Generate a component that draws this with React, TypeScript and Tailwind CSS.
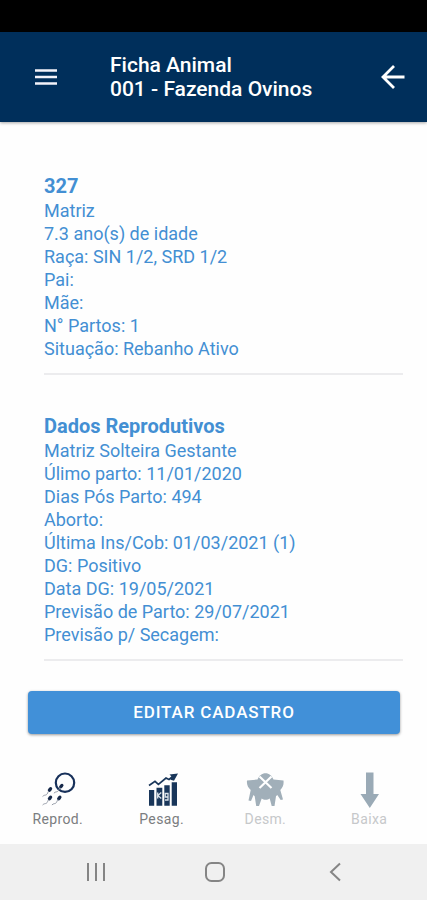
import * as React from "react";

interface SectionProps {
  title: string;
  lines: string[];
}

interface TabProps {
  label: string;
  disabled?: boolean;
  children: React.ReactNode;
}

const animal = {
  id: "327",
  lines: [
    "Matriz",
    "7.3 ano(s) de idade",
    "Raça: SIN 1/2, SRD 1/2",
    "Pai:",
    "Mãe:",
    "N° Partos: 1",
    "Situação: Rebanho Ativo",
  ],
};

const reproducao = [
  "Matriz Solteira Gestante",
  "Úlimo parto: 11/01/2020",
  "Dias Pós Parto: 494",
  "Aborto:",
  "Última Ins/Cob: 01/03/2021 (1)",
  "DG: Positivo",
  "Data DG: 19/05/2021",
  "Previsão de Parto: 29/07/2021",
  "Previsão p/ Secagem:",
];

const MenuIcon = () => (
  <svg viewBox="0 0 24 18" className="h-[18px] w-6" stroke="#f3f3fa" strokeWidth="2.6">
    <path d="M1 2.5h22M1 9h22M1 15.5h22" />
  </svg>
);

const BackIcon = () => (
  <svg
    viewBox="0 0 26 26"
    className="size-[26px]"
    fill="none"
    stroke="#ffffff"
    strokeWidth="2.8"
  >
    <path d="M24.5 13H3M14 2L3 13l11 11" />
  </svg>
);

const Sperm = ({ x, y }: { x: number; y: number }) => (
  <g transform={`translate(${x} ${y})`}>
    <ellipse rx="2.7" ry="1.7" transform="rotate(-48)" fill="#16294a" />
    <path
      d="M-1.3 1.6C-2.6 3-2.2 4.4-3.6 5.2S-5.6 5.2-7.4 7"
      fill="none"
      stroke="#8b929e"
      strokeWidth="0.9"
    />
  </g>
);

const ReprodIcon = () => (
  <svg viewBox="0 0 36 36" className="size-9">
    <circle cx="25" cy="10.7" r="9.2" fill="none" stroke="#17305a" strokeWidth="2.2" />
    <Sperm x={21.3} y={14.2} />
    <Sperm x={10} y={17.5} />
    <Sperm x={10} y={26} />
    <Sperm x={19.3} y={26} />
  </svg>
);

const PesagIcon = () => (
  <svg viewBox="0 0 36 36" className="size-9">
    <g fill="#19365a">
      <path d="M5 18h5.2v15.7H5zM12.5 15.7h5.8v18h-5.800zM20.3 13.3h5.4v20.400h-5.4zM27.7 10.3H33v23.4h-5.3z" />
      <path d="M34 1.500l-8.500 1 2 2-1 3.200 3.500 1z" />
    </g>
    <path
      d="M5 13.5l6-4.2 3.4 3L22 6l3 1.5 5-4"
      fill="none"
      stroke="#19365a"
      strokeWidth="1.7"
    />
    <path
      d="M13.700 20.500v6M17.300 20.500l-3.400 3 3.400 3M24 21.500h-2.800v3.500H24zM24 25v3h-3"
      fill="none"
      stroke="#dbe3ea"
      strokeWidth="1.300"
    />
  </svg>
);

const DesmIcon = () => (
  <svg viewBox="0 0 38 36" className="h-9 w-[38px]">
    <path
      d="M1 8.5l10.500-1C13 3.500 16 1.200 19.500 1.200s6.500 2.300 8 6.300l10 1c.5 4-.7 7-3.200 9.500l2.700 9.500-2.300.5-3.400-5-1.300 1.200-1.500 9.800h-2.800l-2-7.500c-2 1.800-6 1.800-8 0L13 34h-2.800l-1.500-9.800L7.500 23 5 29l-2.500-.5L4.700 18C2 15.500.5 12.500 1 8.500z"
      fill="#a1afb9"
    />
    <path d="M13.500 4.500l12 11.500M25.500 4.500l-12 11.500" stroke="#ffffff" strokeWidth="2.200" />
  </svg>
);

const BaixaIcon = () => (
  <svg viewBox="0 0 36 36" className="size-9" fill="#9aaab6">
    <path d="M15 .5h7.500V22H28l-9.200 14L9.500 22H15z" />
  </svg>
);

const Section = ({ title, lines }: SectionProps) => (
  <section className="ml-11 mr-6 border-b-2 border-[#ececee] pb-[13px] text-[#438fd3]">
    <h2 className="text-xl font-bold leading-[26px]">{title}</h2>
    {lines.map((line) => (
      <p key={line} className="text-lg leading-[23px]">
        {line}
      </p>
    ))}
  </section>
);

const Tab = ({ label, disabled, children }: TabProps) => (
  <button
    type="button"
    disabled={disabled}
    className="flex flex-1 flex-col items-center gap-0.5 text-sm leading-[18px] tracking-wide text-[#7b7d80] disabled:text-[#c6c8ca]"
  >
    {children}
    {label}
  </button>
);

const App = () => {
  return (
    <div className="flex min-h-screen flex-col bg-[#fefefe] font-[Roboto,sans-serif]">
      <div className="h-8 bg-black" />
      <header className="flex h-[90px] items-center bg-[#002f5b] pl-[34px] pr-[21px] text-white shadow-[0_1px_3px_rgba(0,0,0,0.35)]">
        <button type="button" aria-label="Menu">
          <MenuIcon />
        </button>
        <h1 className="ml-[52px] flex-1 text-[21px] font-medium leading-6">
          Ficha Animal
          <br />
          001 - Fazenda Ovinos
        </h1>
        <button type="button" aria-label="Voltar">
          <BackIcon />
        </button>
      </header>

      <main className="flex flex-1 flex-col pt-[51px]">
        <div className="flex flex-col gap-[38px]">
          <Section title={animal.id} lines={animal.lines} />
          <Section title="Dados Reprodutivos" lines={reproducao} />
        </div>
        <button
          type="button"
          className="ml-7 mr-[27px] mt-[30px] h-[43px] rounded bg-[#4190d8] text-[17px] font-medium tracking-wider text-white shadow-[0_1px_3px_rgba(0,0,0,0.4)]"
        >
          EDITAR CADASTRO
        </button>
      </main>

      <nav className="flex px-1.5 pb-4 pt-9">
        <Tab label="Reprod.">
          <ReprodIcon />
        </Tab>
        <Tab label="Pesag.">
          <PesagIcon />
        </Tab>
        <Tab label="Desm." disabled>
          <DesmIcon />
        </Tab>
        <Tab label="Baixa" disabled>
          <BaixaIcon />
        </Tab>
      </nav>

      <div className="flex h-14 items-center justify-around bg-[#f0f0f0] pl-9 pr-8 text-[#858585]">
        <button type="button" aria-label="Recentes">
          <svg viewBox="0 0 20 20" className="size-5" stroke="currentColor" strokeWidth="2">
            <path d="M2 1v18M10 1v18M18 1v18" />
          </svg>
        </button>
        <button type="button" aria-label="Início">
          <svg viewBox="0 0 20 20" className="size-5" fill="none" stroke="currentColor" strokeWidth="2">
            <rect x="1" y="1" width="18" height="18" rx="5.5" />
          </svg>
        </button>
        <button type="button" aria-label="Voltar uma tela">
          <svg viewBox="0 0 20 20" className="size-5" fill="none" stroke="currentColor" strokeWidth="2">
            <path d="M15 1.5L6 10l9 8.5" />
          </svg>
        </button>
      </div>
    </div>
  );
};

export default App;
